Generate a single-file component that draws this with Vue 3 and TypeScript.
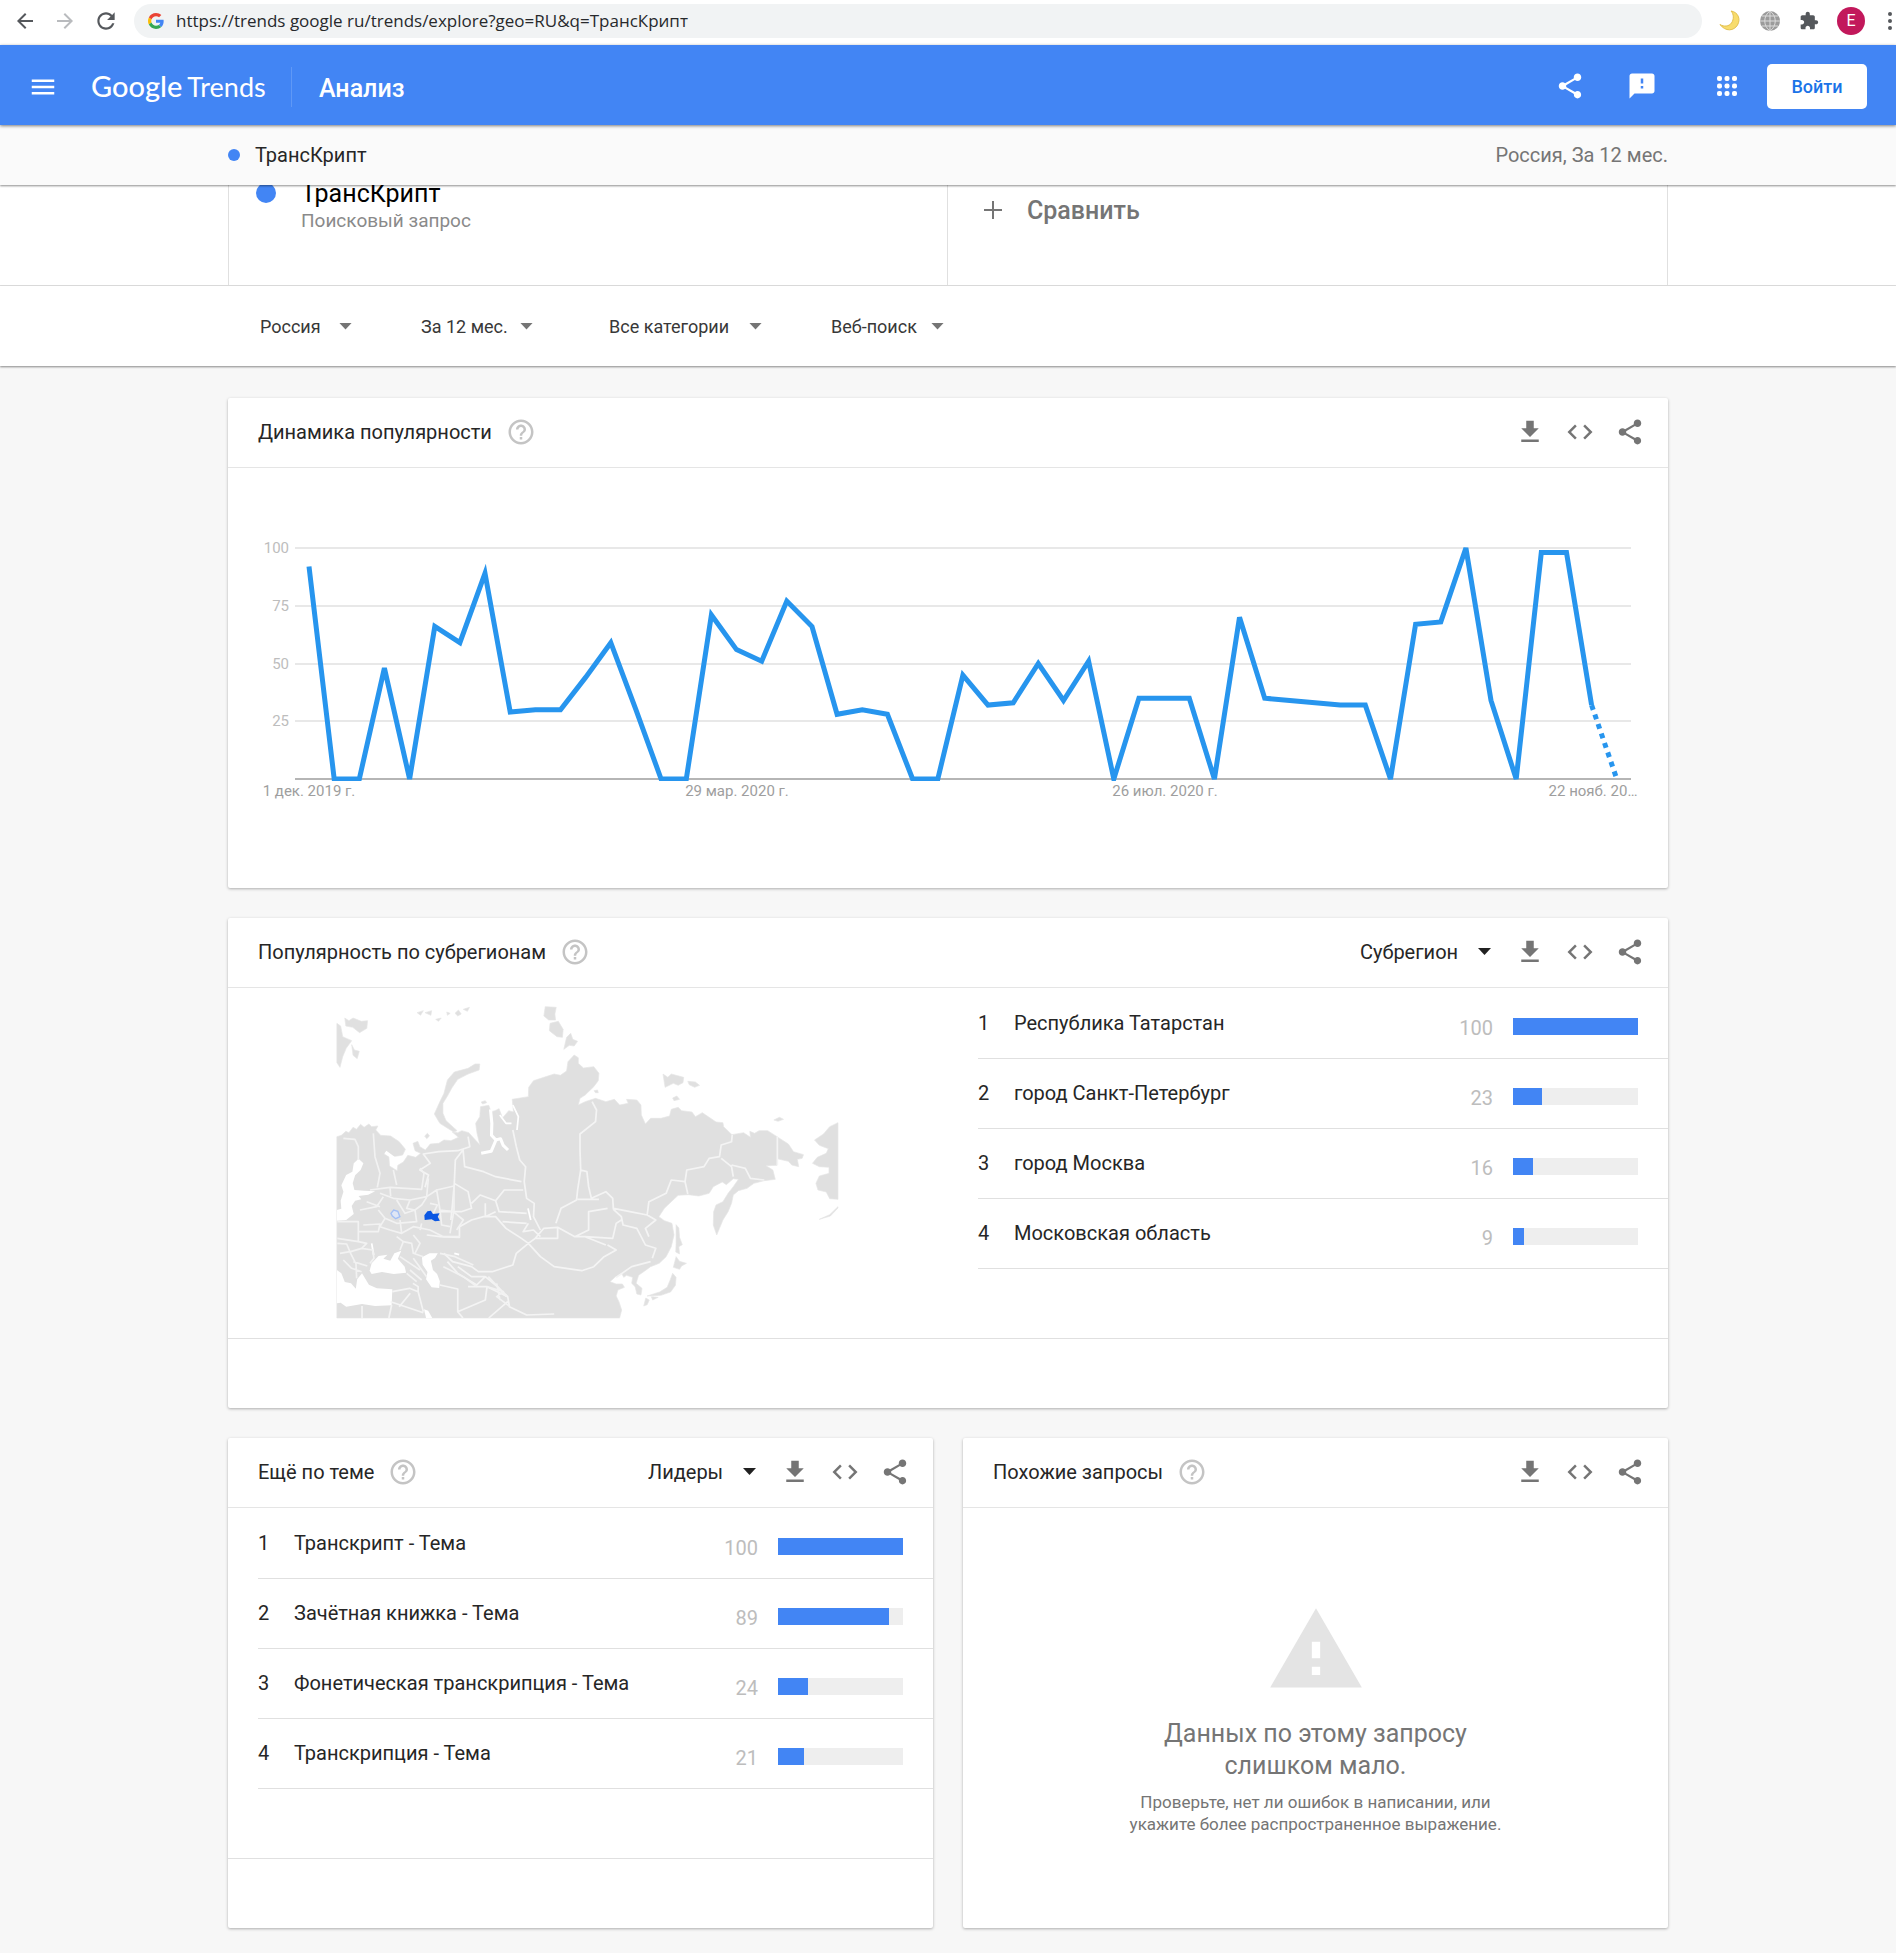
<script setup lang="ts">
interface Row {
  label: string
  value: number
}

const icons = {
  menu: 'M3 18h18v-2H3v2zm0-5h18v-2H3v2zm0-7v2h18V6H3z',
  share:
    'M18 16.08c-.76 0-1.44.3-1.96.77L8.91 12.7c.05-.23.09-.46.09-.7s-.04-.47-.09-.7l7.05-4.11c.54.5 1.25.81 2.04.81 1.66 0 3-1.34 3-3s-1.34-3-3-3-3 1.34-3 3c0 .24.04.47.09.7L8.04 9.81C7.5 9.31 6.79 9 6 9c-1.66 0-3 1.34-3 3s1.34 3 3 3c.79 0 1.5-.31 2.04-.81l7.12 4.16c-.05.21-.08.43-.08.65 0 1.61 1.31 2.92 2.92 2.92s2.92-1.31 2.92-2.92-1.31-2.92-2.92-2.92z',
  feedback:
    'M20 2H4c-1.1 0-1.99.9-1.99 2L2 22l4-4h14c1.1 0 2-.9 2-2V4c0-1.1-.9-2-2-2zm-7 12h-2v-2h2v2zm0-4h-2V6h2v4z',
  download: 'M19 9h-4V3H9v6H5l7 7 7-7zM5 18v2h14v-2H5z',
  code: 'M9.4 16.6L4.8 12l4.6-4.6L8 6l-6 6 6 6 1.4-1.4zm5.2 0l4.6-4.6-4.6-4.6L16 6l6 6-6 6-1.4-1.4z',
  help: 'M11 18h2v-2h-2v2zm1-16C6.48 2 2 6.48 2 12s4.48 10 10 10 10-4.48 10-10S17.52 2 12 2zm0 18c-4.41 0-8-3.59-8-8s3.59-8 8-8 8 3.59 8 8-3.59 8-8 8zm0-14c-2.21 0-4 1.79-4 4h2c0-1.1.9-2 2-2s2 .9 2 2c0 2-3 1.75-3 5h2c0-2.25 3-2.5 3-5 0-2.21-1.79-4-4-4z',
  warning: 'M1 21h22L12 2 1 21zm12-3h-2v-2h2v2zm0-4h-2v-4h2v4z',
  back: 'M20 11H7.83l5.59-5.59L12 4l-8 8 8 8 1.41-1.41L7.83 13H20v-2z',
  forward: 'M12 4l-1.41 1.41L16.17 11H4v2h12.17l-5.58 5.59L12 20l8-8z',
  reload:
    'M17.65 6.35C16.2 4.9 14.21 4 12 4c-4.42 0-7.99 3.58-7.99 8s3.57 8 7.99 8c3.73 0 6.84-2.55 7.73-6h-2.08c-.82 2.33-3.04 4-5.65 4-3.31 0-6-2.69-6-6s2.69-6 6-6c1.66 0 3.14.69 4.22 1.78L13 11h7V4l-2.35 2.35z',
  puzzle:
    'M20.5 11H19V7c0-1.1-.9-2-2-2h-4V3.500C13 2.12 11.88 1 10.5 1S8 2.12 8 3.500V5H4c-1.1 0-1.99.9-1.99 2v3.800H3.500c1.49 0 2.700 1.21 2.700 2.700s-1.21 2.700-2.700 2.700H2V20c0 1.100.9 2 2 2h3.800v-1.500c0-1.490 1.210-2.700 2.700-2.700 1.490 0 2.700 1.210 2.700 2.700V22H17c1.100 0 2-.9 2-2v-4h1.500c1.380 0 2.500-1.120 2.500-2.500S21.880 11 20.500 11z',
}

const cardActions = [
  { name: 'Скачать', icon: icons.download },
  { name: 'Встроить', icon: icons.code },
  { name: 'Поделиться', icon: icons.share },
]

const filters = [
  { id: 'region', name: 'Регион', value: 'Россия' },
  { id: 'period', name: 'Период', value: 'За 12 мес.' },
  { id: 'category', name: 'Категория', value: 'Все категории' },
  { id: 'source', name: 'Тип поиска', value: 'Веб-поиск' },
]

// Weekly interest, 0–100; the last week is incomplete and drawn dotted.
const interest = [
  92, 0, 0, 48, 0, 66, 59, 89, 29, 30, 30, 44, 59, 30, 0, 0, 71, 56, 51, 77, 66, 28, 30, 28, 0, 0,
  45, 32, 33, 50, 34, 51, 0, 35, 35, 35, 0, 70, 35, 34, 33, 32, 32, 0, 67, 68, 100, 34, 0, 98, 98,
  32, 0,
]
const chart = { left: 81, step: 25.15, base: 311, height: 231 }
const point = (v: number, i: number) =>
  `${(chart.left + i * chart.step).toFixed(1)},${(chart.base - (v / 100) * chart.height).toFixed(1)}`
const points = interest.map(point)
const solidLine = points.slice(0, -1).join(' ')
const dottedLine = points.slice(-2).join(' ')
const gridValues = [100, 75, 50, 25]
const gridY = (v: number) => Math.round(chart.base - (v / 100) * chart.height)
const dates = [
  { x: 81, text: '1 дек. 2019 г.' },
  { x: 509, text: '29 мар. 2020 г.' },
  { x: 937, text: '26 июл. 2020 г.' },
  { x: 1365, text: '22 нояб. 20…' },
]

const regions: Row[] = [
  { label: 'Республика Татарстан', value: 100 },
  { label: 'город Санкт-Петербург', value: 23 },
  { label: 'город Москва', value: 16 },
  { label: 'Московская область', value: 9 },
]
const topics: Row[] = [
  { label: 'Транскрипт - Тема', value: 100 },
  { label: 'Зачётная книжка - Тема', value: 89 },
  { label: 'Фонетическая транскрипция - Тема', value: 24 },
  { label: 'Транскрипция - Тема', value: 21 },
]

const land = [
  // Eurasian mainland
  '49,440 62,436 75,424 84,428 96,412 106,418 118,403 128,412 142,402 150,410 168,408 162,420 176,436 205,438 230,455 248,478 240,495 215,500 190,488 186,492 200,500 202,528 224,542 226,526 242,516 255,496 278,502 292,490 276,482 270,460 284,454 290,470 306,480 320,462 345,460 360,450 380,452 402,442 384,426 400,428 412,422 432,428 446,444 464,464 456,430 452,400 464,380 466,350 490,346 497,365 508,362 520,356 530,384 548,362 562,366 558,328 605,320 606,292 620,272 650,262 680,252 698,256 716,243 720,215 738,195 750,203 750,220 765,234 795,230 810,250 808,272 795,290 770,315 755,325 750,345 770,335 800,325 830,335 855,328 870,345 895,340 890,328 920,330 932,345 933,375 945,402 960,385 990,385 1015,378 1020,358 1040,352 1050,362 1080,366 1090,380 1110,368 1130,382 1150,396 1170,398 1172,410 1196,434 1230,428 1250,442 1248,424 1262,430 1275,422 1300,422 1327,440 1360,462 1375,485 1404,494 1400,505 1386,508 1390,530 1370,525 1360,514 1327,506 1327,526 1295,527 1315,540 1322,568 1290,572 1260,580 1240,595 1215,602 1200,615 1195,640 1185,665 1170,690 1160,715 1152,735 1142,705 1143,665 1150,645 1170,635 1185,610 1200,590 1215,568 1200,566 1180,584 1168,576 1142,590 1130,610 1100,618 1070,614 1040,616 1020,635 1000,655 984,680 1000,692 1022,700 1028,735 1020,770 1005,800 985,820 960,830 940,845 925,856 918,880 935,895 932,915 920,912 915,890 905,880 908,862 890,856 882,862 876,850 858,860 842,875 860,882 878,882 884,892 865,900 860,918 868,935 876,960 870,984 49,984',
  // Novaya Zemlya and Vaygach
  '332,372 346,340 360,310 370,270 390,246 430,235 450,222 464,222 462,240 430,252 400,268 384,292 370,318 357,340 357,370 366,392 398,422 388,426 348,400',
  // Svalbard
  '49,100 60,108 66,140 92,152 76,175 66,200 58,232 49,218',
  '72,84 84,92 96,84 120,94 138,92 136,115 115,128 95,112 75,108',
  '92,164 100,180 114,184 108,206 96,196',
  // Franz Josef Land
  '282,68 300,62 292,76', '305,68 324,62 322,76', '336,88 352,84 344,94', '392,70 402,60 410,72 400,78', '416,58 434,52 428,64', '368,66 378,70 370,76',
  // Severnaya Zemlya
  '654,50 686,52 682,72 684,90 664,90 650,78', '668,100 692,94 706,118 704,142 688,140 666,122', '708,178 716,142 728,130 734,148 748,154 738,168 724,166',
  // New Siberian and Wrangel islands
  '996,252 1010,262 1020,252 1056,262 1054,278 1040,286 1026,280 1002,292', '1068,274 1090,276 1102,286 1088,292 1072,284', '1024,324 1036,318 1044,328 1028,332', '1318,390 1334,382 1346,388 1330,394',
  // Kolguyev and Bely
  '304,438 312,430 318,438 310,446', '468,336 480,332 484,338 472,342', '796,302 806,300 808,308 800,308',
  // Sakhalin, Japan
  '1034,704 1042,714 1044,742 1052,764 1042,770 1044,792 1033,786 1034,760', '1034,800 1044,814 1064,820 1050,828 1044,838 1026,832', '1024,850 1034,862 1032,886 1018,906 990,916 950,918 986,906 1008,892 1016,872', '946,924 956,930 950,944 940,948', '962,920 982,922 966,930',
  // Alaska and the Aleutians
  '1504,398 1480,410 1462,432 1436,450 1450,466 1476,476 1470,490 1444,502 1430,520 1450,530 1478,532 1478,550 1450,558 1440,580 1446,600 1470,606 1480,626 1504,628',
  '1450,688 1480,674 1504,650 1504,654 1482,678',
]
const seas = [
  // Baltic
  '98,520 112,506 126,520 118,540 102,556 95,580 100,600 128,602 160,604 140,614 112,618 120,628 102,632 92,648 98,672 76,690 49,692 49,660 62,656 60,632 68,605 62,586 76,555 94,545',
  // Mediterranean
  '49,840 62,850 72,876 90,880 104,896 108,868 122,850 142,884 165,895 210,898 208,946 160,948 122,942 76,950 60,938 49,940',
  // Black Sea and Azov
  '144,842 150,820 170,798 196,794 184,806 204,812 216,790 236,782 226,806 246,830 250,848 214,852 180,846 150,852',
  // Caspian
  '296,802 318,790 342,790 334,804 322,812 328,840 340,852 348,874 346,894 324,892 308,868 312,846 298,824',
  // Persian Gulf
  '302,958 314,962 326,984 308,984',
]
const borders =
  'M790 335L803 360 800 395 755 432 755 480 757 540 748 600 745 630 700 655 685 700M757 540L775 545 780 590 788 625 830 605 850 625 852 658M748 628L810 628M852 655L900 665 950 675 955 635 1005 610 1020 570 1060 575 1065 540 1115 530 1130 505 1160 500 1165 465 1195 455 1197 435M1060 575L1068 612M1165 505L1195 530 1200 560M1195 525L1235 535 1250 565 1290 570M1328 440L1328 526M560 420L570 470 580 510 597 530 593 575 600 625 622 640 620 680 640 720M415 475L420 530 475 545 510 560 585 575M430 440L435 470 400 482 345 485 300 492 320 520 290 540 315 555 305 592M415 480L393 510 390 580 430 605 440 655 410 665 345 665M390 580L385 640 380 690M440 640L465 615 510 632 535 600 590 600M510 632L520 665 600 670M480 640L480 680 510 665M310 735L350 740 405 742 405 710 440 690 475 680 510 680 540 715 585 745 605 760M530 695L600 700M605 700L590 725 620 720 640 740M605 760L570 790 560 825 500 845 460 845 440 830 385 815 360 790M605 760L625 745 690 745 690 712 650 715 625 745M690 712L740 740 780 720 780 665 835 655M740 740L770 740 830 765M770 740L850 745 860 700 875 690M605 760L640 800 680 830 760 842 795 830 825 800 860 780 835 765M852 658L875 680 880 705 920 715 945 765 975 775 965 805M950 675L975 690 945 715 955 740M370 815L400 850 455 885 480 860 515 890 545 920 550 950 600 975 680 972M480 860L440 860 400 830M348 885L400 897 400 965 480 930 485 890 430 890M400 965L415 984M490 984L545 935M485 890L545 920M210 905L260 895 285 905 300 965M270 880L285 890 285 905M230 950L262 910M205 935L300 968M122 948L122 984M208 945L200 984M860 862L905 830 960 815'
const westBorders =
  'M40 85L75 88 85 110 85 150M130 70L135 140 150 190 142 232M190 180L200 225M120 240L180 232 275 238 282 190 270 175M180 232L182 258M150 250L190 265 240 270 290 260 295 205M160 260L140 290 90 300M110 275L150 290M22 335L85 335 85 395 22 385M85 365L145 365 150 342 100 345M145 300L165 325 150 350 180 360 215 370 250 350 300 360 340 380 390 380M165 325L200 340 260 335 255 300 225 310 200 270M210 330L215 370M240 270L230 295 255 300 275 285 290 262M275 340L270 360M290 260L320 240 330 300 370 305M320 240L372 228 372 300 360 370M300 280L322 285 310 310M330 300L335 345 360 350M370 305L400 330 380 360M200 380L220 395 210 420M220 395L245 400 250 430 280 440M250 375L270 400 255 430M210 440L240 460 270 480M250 445L290 500M240 480L275 510M230 490L260 515M22 400L50 402 62 430 78 462 80 505M30 430L60 425M62 425L95 415 128 420 132 445 120 460M70 455L112 468M40 450L65 475 95 485M85 395L110 400 95 415M330 430L375 440 430 465M340 470L400 500 440 530M475 500L530 560M470 530L520 545 500 560 540 590M500 520L510 570'
</script>

<template>
  <div class="page">
    <div class="browser">
      <nav class="browser-nav" aria-label="Навигация браузера">
        <button class="plain" aria-label="Назад"><svg width="24" height="24" viewBox="0 0 24 24"><path :d="icons.back" /></svg></button>
        <button class="plain dim" aria-label="Вперёд"><svg width="24" height="24" viewBox="0 0 24 24"><path :d="icons.forward" /></svg></button>
        <button class="plain" aria-label="Обновить"><svg width="26" height="26" viewBox="0 0 24 24"><path :d="icons.reload" /></svg></button>
      </nav>
      <div class="omnibox">
        <svg width="16" height="16" viewBox="0 0 48 48" aria-hidden="true">
          <path fill="#ea4335" d="M24 9.500c3.540 0 6.710 1.220 9.210 3.600l6.850-6.850C35.900 2.380 30.470 0 24 0 14.620 0 6.510 5.380 2.560 13.220l7.980 6.190C12.430 13.720 17.740 9.500 24 9.500z" />
          <path fill="#4285f4" d="M46.980 24.550c0-1.570-.15-3.090-.38-4.550H24v9.020h12.940c-.58 2.960-2.260 5.480-4.780 7.180l7.730 6c4.510-4.180 7.090-10.360 7.090-17.650z" />
          <path fill="#fbbc05" d="M10.530 28.590c-.48-1.450-.76-2.990-.76-4.590s.27-3.140.76-4.590l-7.980-6.190C.92 16.460 0 20.120 0 24s.92 7.540 2.560 10.780l7.970-6.190z" />
          <path fill="#34a853" d="M24 48c6.480 0 11.930-2.130 15.890-5.810l-7.730-6c-2.150 1.450-4.920 2.300-8.160 2.300-6.260 0-11.570-4.220-13.470-9.910l-7.980 6.190C6.510 42.620 14.620 48 24 48z" />
        </svg>
        <input type="text" aria-label="Адресная строка" value="https://trends google ru/trends/explore?geo=RU&amp;q=ТрансКрипт" />
      </div>
      <div class="extensions">
        <button class="plain" aria-label="Тёмная тема">
          <svg width="22" height="22" viewBox="0 0 22 22"><path d="M12 1c7 1 10 8 6.500 14S6.500 22 1 14.500c4 2.500 9 2 11.500-1.500S15 4 12 1z" fill="#f8dc6c" stroke="#e3c04e" /></svg>
        </button>
        <button class="plain" aria-label="Язык">
          <svg width="22" height="22" viewBox="0 0 22 22">
            <circle cx="11" cy="11" r="10" fill="#9b9b9b" />
            <path d="M11 1v20M1 11h20M3 6h16M3 16h16M11 1C4 6 4 16 11 21M11 1c7 5 7 15 0 20" fill="none" stroke="#dcdcdc" />
          </svg>
        </button>
        <button class="plain" aria-label="Расширения"><svg width="20" height="20" viewBox="0 0 24 24"><path :d="icons.puzzle" /></svg></button>
        <button class="avatar" aria-label="Профиль">E</button>
        <button class="plain dots" aria-label="Меню браузера">
          <svg width="4" height="18" viewBox="0 0 4 18"><circle cx="2" cy="2" r="2" /><circle cx="2" cy="9" r="2" /><circle cx="2" cy="16" r="2" /></svg>
        </button>
      </div>
    </div>

    <header class="app-bar">
      <button class="plain" aria-label="Меню"><svg width="30" height="30" viewBox="0 0 24 24"><path :d="icons.menu" /></svg></button>
      <a class="logo" href="#"><span class="logo-google">Google</span><span class="logo-trends">Trends</span></a>
      <h1 class="section-name">Анализ</h1>
      <div class="app-actions">
        <button class="plain" aria-label="Поделиться"><svg width="30" height="30" viewBox="0 0 24 24"><path :d="icons.share" /></svg></button>
        <button class="plain" aria-label="Отправить отзыв"><svg width="30" height="30" viewBox="0 0 24 24"><path :d="icons.feedback" /></svg></button>
        <button class="plain apps" aria-label="Приложения Google">
          <svg width="20" height="20" viewBox="0 0 20 20">
            <template v-for="r in 3" :key="r"><rect v-for="c in 3" :key="c" :x="(c - 1) * 7.5" :y="(r - 1) * 7.5" width="5" height="5" rx="2" /></template>
          </svg>
        </button>
        <button class="sign-in">Войти</button>
      </div>
    </header>

    <div class="term-bar">
      <div class="container term-row">
        <span class="term"><i class="dot small"></i>ТрансКрипт</span>
        <span class="term-scope">Россия, За 12 мес.</span>
      </div>
    </div>

    <section class="compare">
      <div class="container compare-row">
        <div class="compare-term">
          <i class="dot"></i>
          <div>
            <div class="compare-title">ТрансКрипт</div>
            <div class="compare-kind">Поисковый запрос</div>
          </div>
        </div>
        <button class="compare-add">
          <svg width="18" height="18" viewBox="0 0 18 18" aria-hidden="true"><path d="M8 0h2v8h8v2h-8v8H8v-8H0V8h8z" /></svg>
          Сравнить
        </button>
      </div>
    </section>

    <section class="filters">
      <div class="container filter-row">
        <label v-for="f in filters" :key="f.id" class="picker" :class="'picker-' + f.id">
          <select :aria-label="f.name"><option>{{ f.value }}</option></select>
          <i class="caret"></i>
        </label>
      </div>
    </section>

    <main class="container cards">
      <section class="card">
        <header class="card-head">
          <h2>Динамика популярности</h2>
          <button class="plain help" aria-label="Справка"><svg width="30" height="30" viewBox="0 0 24 24"><path :d="icons.help" /></svg></button>
          <div class="card-actions">
            <button v-for="a in cardActions" :key="a.name" class="plain" :aria-label="a.name"><svg width="30" height="30" viewBox="0 0 24 24"><path :d="a.icon" /></svg></button>
          </div>
        </header>
        <svg class="chart" viewBox="0 0 1440 420" role="img" aria-label="Динамика популярности">
          <defs><clipPath id="plot"><rect x="67" y="78" width="1336" height="235" /></clipPath></defs>
          <g v-for="v in gridValues" :key="v">
            <rect x="67" :y="gridY(v) - 1" width="1336" height="2" class="grid" />
            <text x="61" :y="gridY(v) + 5" text-anchor="end" class="scale">{{ v }}</text>
          </g>
          <rect x="67" y="310" width="1336" height="2" class="axis" />
          <g clip-path="url(#plot)" class="line">
            <polyline :points="solidLine" />
            <polyline :points="dottedLine" stroke-dasharray="5 5" />
          </g>
          <text v-for="d in dates" :key="d.x" :x="d.x" y="328" text-anchor="middle" class="date">{{ d.text }}</text>
        </svg>
      </section>

      <section class="card">
        <header class="card-head">
          <h2>Популярность по субрегионам</h2>
          <button class="plain help" aria-label="Справка"><svg width="30" height="30" viewBox="0 0 24 24"><path :d="icons.help" /></svg></button>
          <div class="card-actions">
            <label class="picker picker-head"><select aria-label="Уровень"><option>Субрегион</option></select><i class="caret"></i></label>
            <button v-for="a in cardActions" :key="a.name" class="plain" :aria-label="a.name"><svg width="30" height="30" viewBox="0 0 24 24"><path :d="a.icon" /></svg></button>
          </div>
        </header>
        <div class="region-body">
          <svg class="map" viewBox="0 -6 1568 1050" preserveAspectRatio="none" role="img" aria-label="Карта России">
            <polygon v-for="p in land" :key="p" :points="p" fill="#e0e0e0" stroke="#e6e6e6" stroke-width="2" />
            <polygon v-for="p in seas" :key="p" :points="p" fill="#fff" />
            <g fill="none" stroke="#fff" stroke-linejoin="round">
              <path stroke-width="9" d="M495 358L499 400 498 436 511 450 497 484 468 490M511 450L524 446 532 466 546 480M190 486L214 504 240 506" />
              <path stroke-width="5" d="M560 345L576 380 572 420M522 375L540 400 556 400M156 795L150 760M390 790L404 794M604 655L612 690" />
              <path stroke="#f4f4f4" stroke-width="5" :d="borders" />
              <path stroke="#f2f2f2" stroke-width="5" transform="translate(29 360) scale(.968 1)" :d="westBorders" />
            </g>
            <polygon points="303,676 312,664 322,662 328,672 347,670 342,680 348,692 334,694 324,688 304,690" fill="#0b57e3" />
            <path d="M206 670L214 660 226 664 232 680 220 686 210 678z" fill="#dfe6f5" stroke="#a3bff5" stroke-width="4" />
          </svg>
          <table class="ranks">
            <tbody>
              <tr v-for="(r, i) in regions" :key="r.label">
                <td class="rank">{{ i + 1 }}</td>
                <td>{{ r.label }}</td>
                <td class="value">{{ r.value }}</td>
                <td class="bar-cell"><div class="bar"><div :style="{ width: r.value + '%' }"></div></div></td>
              </tr>
            </tbody>
          </table>
        </div>
        <footer class="card-foot"></footer>
      </section>

      <div class="pair">
        <section class="card">
          <header class="card-head">
            <h2>Ещё по теме</h2>
            <button class="plain help" aria-label="Справка"><svg width="30" height="30" viewBox="0 0 24 24"><path :d="icons.help" /></svg></button>
            <div class="card-actions">
              <label class="picker picker-head"><select aria-label="Сортировка"><option>Лидеры</option></select><i class="caret"></i></label>
              <button v-for="a in cardActions" :key="a.name" class="plain" :aria-label="a.name"><svg width="30" height="30" viewBox="0 0 24 24"><path :d="a.icon" /></svg></button>
            </div>
          </header>
          <div class="topic-body">
            <table class="ranks">
              <tbody>
                <tr v-for="(r, i) in topics" :key="r.label">
                  <td class="rank">{{ i + 1 }}</td>
                  <td>{{ r.label }}</td>
                  <td class="value">{{ r.value }}</td>
                  <td class="bar-cell"><div class="bar"><div :style="{ width: r.value + '%' }"></div></div></td>
                </tr>
              </tbody>
            </table>
          </div>
          <footer class="card-foot"></footer>
        </section>

        <section class="card">
          <header class="card-head">
            <h2>Похожие запросы</h2>
            <button class="plain help" aria-label="Справка"><svg width="30" height="30" viewBox="0 0 24 24"><path :d="icons.help" /></svg></button>
            <div class="card-actions">
              <button v-for="a in cardActions" :key="a.name" class="plain" :aria-label="a.name"><svg width="30" height="30" viewBox="0 0 24 24"><path :d="a.icon" /></svg></button>
            </div>
          </header>
          <div class="empty">
            <svg width="100" height="100" viewBox="0 0 24 24" aria-hidden="true"><path :d="icons.warning" /></svg>
            <p class="empty-title">Данных по этому запросу<br />слишком мало.</p>
            <p class="empty-text">Проверьте, нет ли ошибок в написании, или<br />укажите более распространенное выражение.</p>
          </div>
        </section>
      </div>
    </main>
  </div>
</template>

<style>
body {
  margin: 0;
  background: #f7f7f7;
}
</style>

<style scoped>
.page {
  font-family: Roboto, 'Liberation Sans', sans-serif;
  font-size: 20px;
  color: #262626;
  padding-bottom: 25px;
}
.page *,
.page {
  box-sizing: border-box;
}
svg {
  display: block;
  fill: currentColor;
}
h1,
h2,
p {
  margin: 0;
  font-weight: 400;
}
button,
input,
select {
  font: inherit;
  color: inherit;
  border: 0;
  margin: 0;
  padding: 0;
  background: none;
  outline: 0;
}
.plain {
  display: flex;
  align-items: center;
  justify-content: center;
}
.container {
  width: min(1440px, 100% - 48px);
  margin: 0 auto;
}

.browser {
  display: flex;
  height: 45px;
  align-items: center;
  padding: 0 4px 4px 13px;
  background: #fff;
  color: #55585c;
}
.browser-nav {
  display: flex;
  gap: 16px;
  width: 121px;
}
.dim {
  color: #b9bbbe;
}
.omnibox {
  flex: 1;
  display: flex;
  align-items: center;
  gap: 12px;
  height: 34px;
  padding: 0 14px;
  border-radius: 17px;
  background: #f1f3f4;
}
.omnibox input {
  flex: 1;
  font-family: 'Open Sans', 'Noto Sans', sans-serif;
  font-size: 17px;
  color: #27292c;
}
.extensions {
  display: flex;
  align-items: center;
  gap: 18px;
  margin-left: 17px;
}
.avatar {
  width: 28px;
  height: 28px;
  border-radius: 50%;
  background: #c2185b;
  color: #fff;
  font-size: 16px;
}
.dots {
  margin-left: 5px;
}

.app-bar {
  position: relative;
  z-index: 3;
  display: flex;
  align-items: center;
  height: 80px;
  padding: 4px 29px 0 28px;
  background: #4285f4;
  color: #fff;
  box-shadow: 0 1px 3px rgba(0, 0, 0, 0.5);
}
.logo {
  display: flex;
  align-items: baseline;
  gap: 5px;
  flex: 0 0 201px;
  height: 40px;
  margin-left: 33px;
  line-height: 38px;
  border-right: 1px solid #5f98f6;
  color: #fff;
  text-decoration: none;
  font-family: Lato, sans-serif;
}
.logo-google {
  font-size: 29px;
  font-weight: 500;
}
.logo-trends {
  font-size: 27px;
}
.section-name {
  margin-left: 27px;
  padding-top: 2px;
  font-size: 25px;
  font-weight: 500;
}
.app-actions {
  display: flex;
  align-items: center;
  gap: 42px;
  margin: -2px 0 0 auto;
}
.apps {
  margin-left: 18px;
}
.sign-in {
  width: 100px;
  height: 45px;
  margin-left: -12px;
  border-radius: 5px;
  background: #fff;
  color: #1a73e8;
  font-size: 18px;
  font-weight: 500;
}

.term-bar {
  position: relative;
  z-index: 2;
  height: 60px;
  background: #fafafa;
  box-shadow: 0 1px 2px rgba(0, 0, 0, 0.45);
}
.term-row {
  display: flex;
  align-items: center;
  justify-content: space-between;
  height: 60px;
}
.term {
  display: flex;
  align-items: center;
  gap: 15px;
}
.dot {
  flex: none;
  width: 20px;
  height: 20px;
  border-radius: 50%;
  background: #4285f4;
}
.dot.small {
  width: 12px;
  height: 12px;
}
.term-scope {
  color: #757575;
}

.compare {
  height: 101px;
  overflow: hidden;
  background: #fff;
  border-bottom: 1px solid #e0e0e0;
}
.compare-row {
  display: grid;
  grid-template-columns: 1fr 1fr;
  height: 100px;
  border: solid #e0e0e0;
  border-width: 0 1px;
}
.compare-term {
  display: flex;
  gap: 25px;
  padding-left: 27px;
  border-right: 1px solid #e0e0e0;
}
.compare-term .dot {
  margin-top: -2px;
}
.compare-title {
  font-size: 25px;
  line-height: 18px;
  color: #000;
}
.compare-kind {
  margin-top: 5px;
  font-size: 19px;
  line-height: 26px;
  color: #8a8a8a;
}
.compare-add {
  display: flex;
  align-items: center;
  gap: 25px;
  height: 50px;
  padding-left: 36px;
  font-size: 25px;
  font-weight: 500;
  color: #757575;
}

.filters {
  background: #fff;
  box-shadow: 0 1px 2px rgba(0, 0, 0, 0.45);
}
.filter-row {
  display: grid;
  grid-template-columns: 161px 188px 222px auto;
  align-items: center;
  height: 80px;
  padding-left: 32px;
}
.picker {
  position: relative;
  display: flex;
  align-items: center;
}
.picker select {
  appearance: none;
  width: 100%;
  font-size: 18px;
}
.filters select {
  color: #383838;
}
.caret {
  position: absolute;
  right: 0;
  width: 13px;
  height: 7px;
  background: #757575;
  clip-path: polygon(0 0, 100% 0, 50% 100%);
  pointer-events: none;
}
.picker-region {
  width: 92px;
}
.picker-period {
  width: 112px;
}
.picker-category {
  width: 153px;
}
.picker-source {
  width: 113px;
}
.picker-head select {
  font-size: 20px;
  padding-right: 46px;
}
.picker-head .caret {
  right: 14px;
  background: #212121;
}

.cards {
  display: flex;
  flex-direction: column;
  gap: 30px;
  padding-top: 32px;
}
.card {
  background: #fff;
  border-radius: 2px;
  box-shadow: 0 1px 3px rgba(0, 0, 0, 0.3);
}
.card-head {
  display: flex;
  align-items: center;
  height: 70px;
  padding: 0 13px 2px 30px;
  border-bottom: 1px solid #e5e5e5;
}
.card-head h2 {
  font-size: 20px;
}
.help {
  margin-left: 14px;
  color: #c4c4c4;
}
.card-actions {
  display: flex;
  margin-left: auto;
  color: #757575;
}
.card-actions .plain {
  width: 50px;
  height: 50px;
}
.card-actions select {
  color: #262626;
}
.chart {
  width: 100%;
}
.grid {
  fill: #e8e8e8;
}
.axis {
  fill: #b5b5b5;
}
.scale {
  font-size: 15px;
  fill: #bdbdbd;
}
.date {
  font-size: 15px;
  fill: #9e9e9e;
}
.line {
  fill: none;
  stroke: #2795ee;
  stroke-width: 5;
}

.region-body {
  display: grid;
  grid-template-columns: minmax(0, 750px) minmax(0, 690px);
  align-items: start;
}
.map {
  width: 540px;
  max-width: 100%;
  height: 350px;
  margin-left: 92px;
}
.ranks {
  width: 100%;
  border-collapse: collapse;
}
.ranks tr {
  height: 70px;
  border-bottom: 1px solid #e0e0e0;
}
.ranks td {
  padding: 0;
}
.ranks .rank {
  width: 36px;
}
.ranks .value {
  width: 60px;
  padding-top: 10px;
  text-align: right;
  color: #bdbdbd;
}
.ranks .bar-cell {
  width: 175px;
  padding: 7px 30px 0 20px;
}
.bar {
  height: 17px;
  background: #eee;
}
.bar div {
  height: 17px;
  background: #4285f4;
}
.card-foot {
  height: 70px;
  border-top: 1px solid #e0e0e0;
}

.pair {
  display: grid;
  grid-template-columns: 1fr 1fr;
  gap: 30px;
}
.topic-body {
  min-height: 350px;
  padding-left: 30px;
}
.empty {
  display: flex;
  flex-direction: column;
  align-items: center;
  padding-top: 92px;
  text-align: center;
  color: #757575;
}
.empty svg {
  color: #e4e4e4;
}
.empty-title {
  margin-top: 18px;
  font-size: 25px;
  line-height: 32px;
}
.empty-text {
  margin-top: 9px;
  font-size: 17px;
  line-height: 22px;
}
</style>
